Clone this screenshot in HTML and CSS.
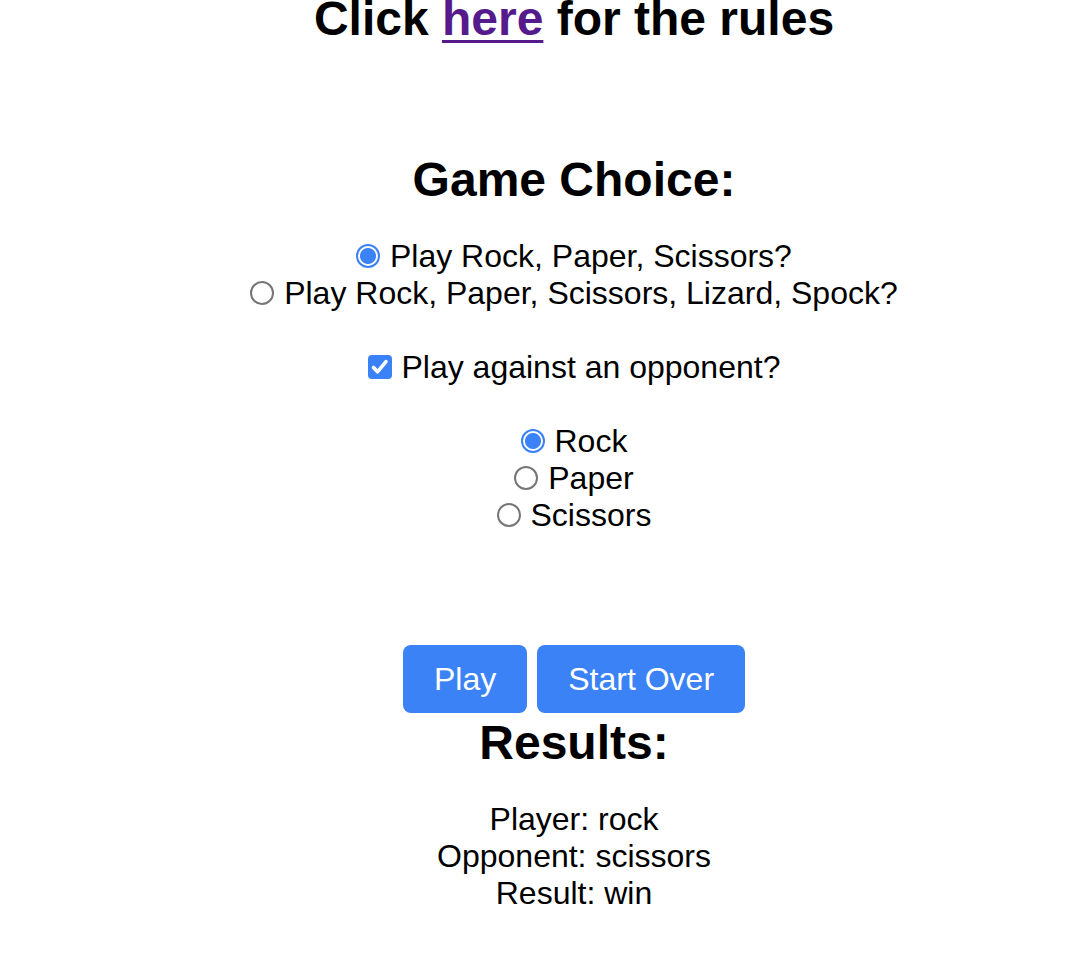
FILE: index.html
```html
<!DOCTYPE html>
<html lang="en">
<head>
<meta charset="utf-8">
<title>Rock Paper Scissors</title>
<link rel="stylesheet" href="styles.css">
</head>
<body>
<div class="page">
  <h1 class="title">Click <a href="#" class="rules-link">here</a> for the rules</h1>

  <h2 class="section-title game-title">Game Choice:</h2>

  <div class="group">
    <label class="opt"><input type="radio" name="game" class="radio" checked> Play Rock, Paper, Scissors?</label>
    <label class="opt"><input type="radio" name="game" class="radio"> Play Rock, Paper, Scissors, Lizard, Spock?</label>
  </div>

  <div class="group spaced">
    <label class="opt"><input type="checkbox" class="check" checked> Play against an opponent?</label>
  </div>

  <div class="group spaced">
    <label class="opt"><input type="radio" name="shot" class="radio" checked> Rock</label>
    <label class="opt"><input type="radio" name="shot" class="radio"> Paper</label>
    <label class="opt"><input type="radio" name="shot" class="radio"> Scissors</label>
  </div>

  <div class="buttons">
    <button class="btn">Play</button>
    <button class="btn">Start Over</button>
  </div>

  <h2 class="section-title results-title">Results:</h2>

  <div class="results">
    <p class="line">Player: rock</p>
    <p class="line">Opponent: scissors</p>
    <p class="line">Result: win</p>
  </div>
</div>
</body>
</html>
```

FILE: styles.css
```css
html, body {
  margin: 0;
  padding: 0;
  background: #ffffff;
}

body {
  font-family: "Liberation Sans", Arial, sans-serif;
  color: #000000;
  font-size: 32px;
  line-height: 37px;
}

.page {
  margin-top: -9px;
  padding-left: 78px;
  text-align: center;
}

.title {
  margin: 0;
  font-size: 48px;
  line-height: 55px;
  font-weight: bold;
}

.rules-link {
  color: #551a8b;
  text-decoration: underline;
  text-decoration-thickness: 3px;
  text-underline-offset: 5px;
}

.section-title {
  margin: 0;
  font-size: 48px;
  line-height: 55px;
  font-weight: bold;
}

.game-title {
  margin-top: 106px;
}

.group {
  margin-top: 31px;
}

.group.spaced {
  margin-top: 37px;
}

.opt {
  display: block;
  height: 37px;
}

.radio,
.check {
  -webkit-appearance: none;
  appearance: none;
  margin: 0 1px 0 0;
  vertical-align: -1px;
  box-sizing: border-box;
  width: 24px;
  height: 24px;
}

.radio {
  border: 2px solid #767676;
  border-radius: 50%;
  background: #ffffff;
}

.radio:checked {
  border: 2px solid #3b82f6;
  background: radial-gradient(circle, #3b82f6 0 7.5px, #ffffff 8.5px);
}

.check {
  border-radius: 4px;
  background: #3b82f6 url("data:image/svg+xml,%3Csvg xmlns='http://www.w3.org/2000/svg' viewBox='0 0 24 24'%3E%3Cpath d='M5.5 12.5l4 4.3 8.5-10.2' fill='none' stroke='white' stroke-width='3.6' stroke-linecap='round' stroke-linejoin='round'/%3E%3C/svg%3E") center / 24px 24px no-repeat;
}

.buttons {
  margin-top: 111px;
  display: flex;
  justify-content: center;
  gap: 10px;
}

.btn {
  height: 68px;
  padding: 0 31px;
  border: none;
  border-radius: 8px;
  background: #3b82f6;
  color: #ffffff;
  font-family: "Liberation Sans", Arial, sans-serif;
  font-size: 32px;
  line-height: 37px;
}

.results-title {
  margin-top: 2px;
}

.results {
  margin-top: 31px;
}

.line {
  margin: 0;
}
```
